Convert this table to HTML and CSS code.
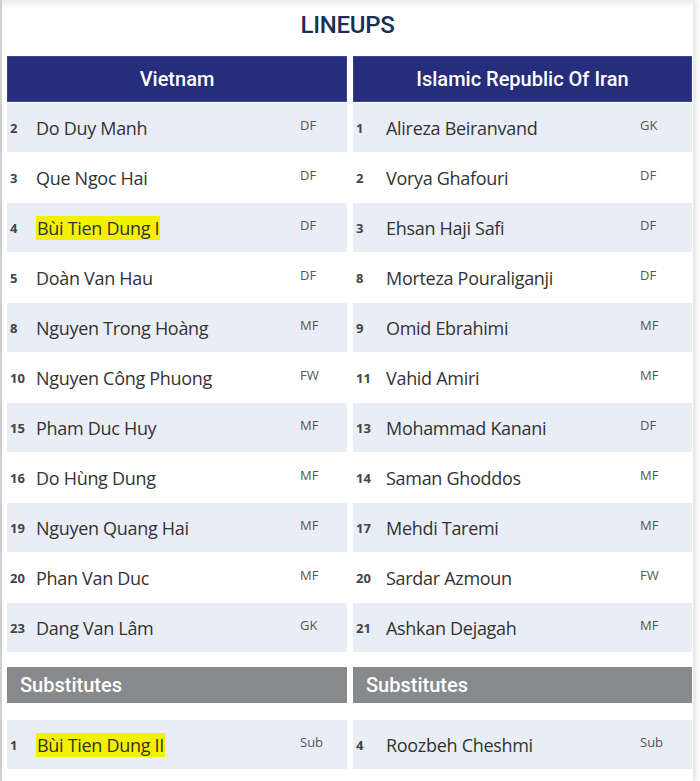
FILE: index.html
```html
<!DOCTYPE html>
<html>
<head>
<meta charset="utf-8">
<link rel="stylesheet" href="styles.css">
</head>
<body>
<div class="page">
  <h1 class="title">LINEUPS</h1>
  <div class="teams">
    <div class="team">
      <div class="team-head">Vietnam</div>
      <div class="rows">
        <div class="row"><span class="num">2</span><span class="name">Do Duy Manh</span><span class="pos">DF</span></div>
        <div class="row"><span class="num">3</span><span class="name">Que Ngoc Hai</span><span class="pos">DF</span></div>
        <div class="row"><span class="num">4</span><span class="name"><mark class="hl">Bùi Tien Dung I</mark></span><span class="pos">DF</span></div>
        <div class="row"><span class="num">5</span><span class="name">Doàn Van Hau</span><span class="pos">DF</span></div>
        <div class="row"><span class="num">8</span><span class="name">Nguyen Trong Hoàng</span><span class="pos">MF</span></div>
        <div class="row"><span class="num">10</span><span class="name">Nguyen Công Phuong</span><span class="pos">FW</span></div>
        <div class="row"><span class="num">15</span><span class="name">Pham Duc Huy</span><span class="pos">MF</span></div>
        <div class="row"><span class="num">16</span><span class="name">Do Hùng Dung</span><span class="pos">MF</span></div>
        <div class="row"><span class="num">19</span><span class="name">Nguyen Quang Hai</span><span class="pos">MF</span></div>
        <div class="row"><span class="num">20</span><span class="name">Phan Van Duc</span><span class="pos">MF</span></div>
        <div class="row"><span class="num">23</span><span class="name">Dang Van Lâm</span><span class="pos">GK</span></div>
      </div>
      <div class="sub-head">Substitutes</div>
      <div class="rows subs">
        <div class="row"><span class="num">1</span><span class="name"><mark class="hl">Bùi Tien Dung II</mark></span><span class="pos">Sub</span></div>
      </div>
    </div>
    <div class="team team-right">
      <div class="team-head">Islamic Republic Of Iran</div>
      <div class="rows">
        <div class="row"><span class="num">1</span><span class="name">Alireza Beiranvand</span><span class="pos">GK</span></div>
        <div class="row"><span class="num">2</span><span class="name">Vorya Ghafouri</span><span class="pos">DF</span></div>
        <div class="row"><span class="num">3</span><span class="name">Ehsan Haji Safi</span><span class="pos">DF</span></div>
        <div class="row"><span class="num">8</span><span class="name">Morteza Pouraliganji</span><span class="pos">DF</span></div>
        <div class="row"><span class="num">9</span><span class="name">Omid Ebrahimi</span><span class="pos">MF</span></div>
        <div class="row"><span class="num">11</span><span class="name">Vahid Amiri</span><span class="pos">MF</span></div>
        <div class="row"><span class="num">13</span><span class="name">Mohammad Kanani</span><span class="pos">DF</span></div>
        <div class="row"><span class="num">14</span><span class="name">Saman Ghoddos</span><span class="pos">MF</span></div>
        <div class="row"><span class="num">17</span><span class="name">Mehdi Taremi</span><span class="pos">MF</span></div>
        <div class="row"><span class="num">20</span><span class="name">Sardar Azmoun</span><span class="pos">FW</span></div>
        <div class="row"><span class="num">21</span><span class="name">Ashkan Dejagah</span><span class="pos">MF</span></div>
      </div>
      <div class="sub-head">Substitutes</div>
      <div class="rows subs">
        <div class="row"><span class="num">4</span><span class="name">Roozbeh Cheshmi</span><span class="pos">Sub</span></div>
      </div>
    </div>
  </div>
</div>
</body>
</html>
```

FILE: styles.css
```css
html, body {
  margin: 0;
  padding: 0;
  background: #ffffff;
}

body {
  font-family: "Open Sans", "DejaVu Sans", sans-serif;
  color: #3a3a3a;
}

.page {
  width: 693px;
  height: 781px;
  box-sizing: border-box;
  border-left: 2px solid #cfcfcf;
  padding: 0 0 0 5px;
  background: linear-gradient(to bottom, #ececec 0, #ffffff 8px);
  box-shadow: 3px 0 6px rgba(0, 0, 0, 0.12);
}

.title {
  margin: 0;
  height: 56px;
  line-height: 50px;
  text-align: center;
  font-family: Roboto, "Open Sans", sans-serif;
  font-size: 24px;
  font-weight: 500;
  color: #1b2f52;
  letter-spacing: -0.3px;
  padding-right: 5px;
}

.teams {
  display: grid;
  grid-template-columns: 340px 339px;
  column-gap: 6px;
}

.team-head {
  height: 46px;
  line-height: 46px;
  background: #252d7c;
  color: #ffffff;
  text-align: center;
  font-family: Roboto, "Open Sans", sans-serif;
  font-size: 20px;
  font-weight: 500;
  box-shadow: inset 0 0 0 1px #3a4290;
}

.row {
  display: flex;
  align-items: center;
  height: 50px;
  box-sizing: border-box;
  border-top: 1px solid #ffffff;
  padding-left: 3px;
}

.rows .row:nth-child(odd) {
  background: #e9eef6;
}

.num {
  width: 26px;
  font-size: 13px;
  font-weight: 700;
  color: #444444;
}

.team-right .num {
  width: 30px;
}

.name {
  flex: 1;
  font-size: 18px;
  color: #333333;
  letter-spacing: -0.3px;
}

.pos {
  width: 47px;
  font-size: 13px;
  color: #555555;
  margin-top: -6px;
}

.team-right .pos {
  width: 52px;
}

.hl {
  background: #f2f200;
  color: #333333;
  padding: 0 1px;
}

.sub-head {
  margin-top: 15px;
  height: 36px;
  line-height: 36px;
  background: #88898d;
  color: #ffffff;
  font-family: Roboto, "Open Sans", sans-serif;
  font-size: 20px;
  font-weight: 500;
  padding-left: 13px;
}

.subs {
  margin-top: 16px;
}
```
